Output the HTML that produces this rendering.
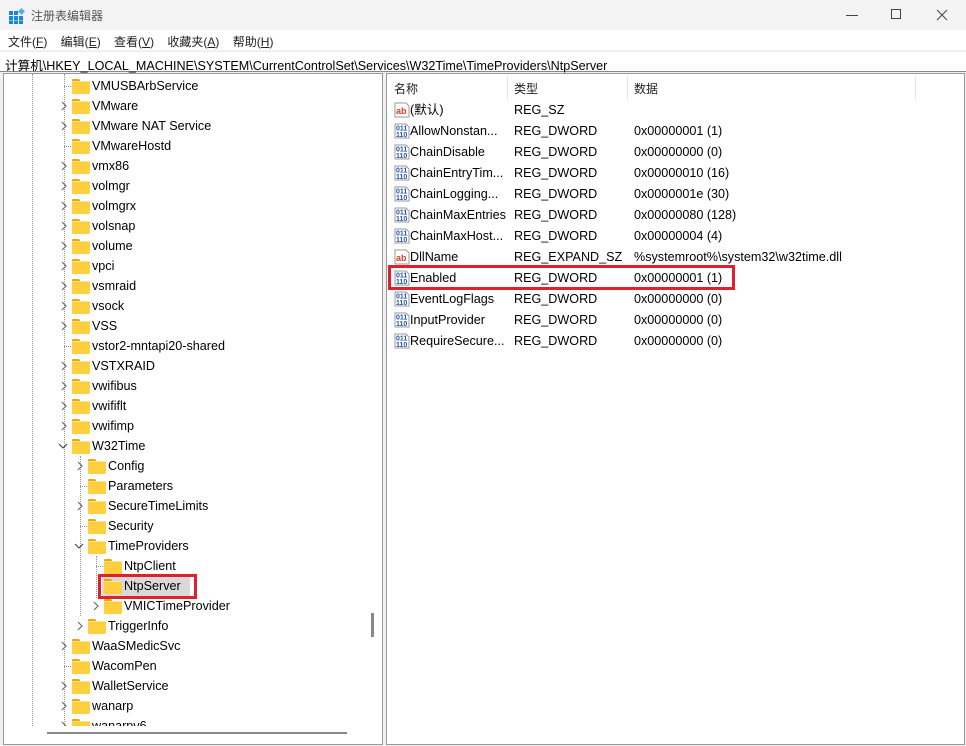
<!DOCTYPE html><html><head><meta charset="utf-8"><style>
*{margin:0;padding:0;box-sizing:border-box}
body{width:966px;height:746px;background:#f0f0f0;font-family:"Liberation Sans","Noto Sans CJK SC",sans-serif;font-size:12.6px;color:#000;position:relative;overflow:hidden}
.a{position:absolute;white-space:nowrap}
.row{position:absolute;height:20px;line-height:20px}
.fold{position:absolute;width:18px;height:14px;top:3px}
.fold:before{content:"";position:absolute;left:0;top:0;width:8px;height:4px;background:#e7a800;border-radius:1px 2px 0 0}
.fold:after{content:"";position:absolute;left:0;top:2px;width:18px;height:12px;background:#ffcf3f;border-top:1px solid #ffe48a;border-radius:1px}
.arr{position:absolute}
.dot{position:absolute;top:10px;width:9px;border-top:1px dotted #888}
.vl{position:absolute;border-left:1px dotted #999}
.ic{position:absolute;left:394px;width:16px;height:16px}
.rr{position:absolute;height:21px;line-height:21px}
</style></head><body>
<div class="a" style="left:0;top:0;width:966px;height:30px;background:#f3f3f3"></div>
<svg class="a" style="left:9px;top:8px" width="16" height="16"><g fill="#1a86d6"><rect x="0" y="3" width="4" height="4"/><rect x="5" y="3" width="4" height="4"/><rect x="0" y="8" width="4" height="4"/><rect x="5" y="8" width="4" height="4"/><rect x="10" y="8" width="4" height="4"/><rect x="0" y="12.5" width="4" height="3.5"/><rect x="5" y="12.5" width="4" height="3.5"/><rect x="10" y="12.5" width="4" height="3.5"/></g><rect x="10" y="1" width="5" height="5" fill="#4fb2ee" transform="rotate(45 12.5 3.5)"/></svg>
<div class="a" style="left:31px;top:7px;font-size:12px;color:#555">注册表编辑器</div>
<div class="a" style="left:846px;top:15px;width:12px;border-top:1px solid #444"></div>
<div class="a" style="left:891px;top:9px;width:10px;height:10px;border:1px solid #444"></div>
<svg class="a" style="left:936px;top:9px" width="12" height="12"><path d="M1 1L11 11M11 1L1 11" stroke="#444" stroke-width="1"/></svg>
<div class="a" style="left:0;top:30px;width:966px;height:20px;background:#fff"></div>
<div class="a" style="left:8px;top:33px;font-size:12px;color:#222">文件(<u>F</u>)&nbsp;&nbsp;&nbsp;&nbsp;编辑(<u>E</u>)&nbsp;&nbsp;&nbsp;&nbsp;查看(<u>V</u>)&nbsp;&nbsp;&nbsp;&nbsp;收藏夹(<u>A</u>)&nbsp;&nbsp;&nbsp;&nbsp;帮助(<u>H</u>)</div>
<div class="a" style="left:0;top:52px;width:966px;height:20px;background:#fff;border-bottom:1px solid #888"></div>
<div class="a" style="left:5px;top:55px;font-size:12.6px">计算机\HKEY_LOCAL_MACHINE\SYSTEM\CurrentControlSet\Services\W32Time\TimeProviders\NtpServer</div>
<div class="a" style="left:3px;top:73px;width:380px;height:672px;background:#fff;border:1px solid #999;overflow:hidden">
<div class="a" style="left:0;top:0;width:362px;height:652px;overflow:hidden" id="t">
<div class="vl" style="left:28px;top:0;height:652px"></div>
<div class="vl" style="left:60px;top:0;height:652px"></div>
<div class="vl" style="left:76px;top:382px;height:160px"></div>
<div class="vl" style="left:92px;top:482px;height:42px"></div>
</div>
<div class="a" style="left:362px;top:0;width:16px;height:652px;background:#fff"></div>
<div class="a" style="left:367px;top:539px;width:3px;height:24px;background:#888"></div>
<div class="a" style="left:0;top:652px;width:378px;height:18px;background:#fff"></div>
<div class="a" style="left:43px;top:658px;width:300px;height:2px;background:#888"></div>
</div>
<div class="a" style="left:386px;top:73px;width:579px;height:672px;background:#fff;border:1px solid #999"></div>
<div class="a" style="left:507px;top:76px;height:24px;border-left:1px solid #e5e5e5"></div>
<div class="a" style="left:627px;top:76px;height:24px;border-left:1px solid #e5e5e5"></div>
<div class="a" style="left:915px;top:76px;height:24px;border-left:1px solid #e5e5e5"></div>
<div class="a" style="left:394px;top:80px;font-size:12px;color:#222">名称</div>
<div class="a" style="left:514px;top:80px;font-size:12px;color:#222">类型</div>
<div class="a" style="left:634px;top:80px;font-size:12px;color:#222">数据</div>
<div id="l"></div>
<div class="a" style="left:388px;top:265px;width:347px;height:25px;border:3px solid #e0202a"></div>
<div class="a" style="left:98px;top:574px;width:99px;height:25px;border:3px solid #e0202a"></div>
<script>
var T=[["VMUSBArbService",0,0],["VMware",0,1],["VMware NAT Service",0,1],["VMwareHostd",0,0],["vmx86",0,1],["volmgr",0,1],["volmgrx",0,1],["volsnap",0,1],["volume",0,1],["vpci",0,1],["vsmraid",0,1],["vsock",0,1],["VSS",0,1],["vstor2-mntapi20-shared",0,0],["VSTXRAID",0,1],["vwifibus",0,1],["vwififlt",0,1],["vwifimp",0,1],["W32Time",0,2],["Config",1,1],["Parameters",1,0],["SecureTimeLimits",1,1],["Security",1,0],["TimeProviders",1,2],["NtpClient",2,0],["NtpServer",2,3],["VMICTimeProvider",2,1],["TriggerInfo",1,1],["WaaSMedicSvc",0,1],["WacomPen",0,0],["WalletService",0,1],["wanarp",0,1],["wanarpv6",0,1]];
var h="";T.forEach(function(r,i){var y=i*20+2,d=r[1]*16,fx=68+d;
if(r[2]==1)h+='<svg class="arr" style="left:'+(55+d)+'px;top:'+(y+5)+'px" width="10" height="10"><path d="M3 1L7 5L3 9" fill="none" stroke="#666" stroke-width="1.1"/></svg>';
else if(r[2]==2)h+='<svg class="arr" style="left:'+(54+d)+'px;top:'+(y+5)+'px" width="10" height="10"><path d="M1 3L5 7L9 3" fill="none" stroke="#444" stroke-width="1.1"/></svg>';
else if(r[2]==0)h+='<div class="dot" style="left:'+(60+d)+'px;top:'+(y+10)+'px"></div>';
if(r[2]==3)h+='<div class="a" style="left:'+(fx-2)+'px;top:'+y+'px;width:88px;height:20px;background:#d9d9d9"></div>';
h+='<div class="fold" style="left:'+fx+'px;top:'+(y+3)+'px"></div><div class="row" style="left:'+(fx+20)+'px;top:'+y+'px">'+r[0]+'</div>';});
document.getElementById("t").innerHTML+=h;
var L=[["(默认)","REG_SZ","",1],["AllowNonstan...","REG_DWORD","0x00000001 (1)"],["ChainDisable","REG_DWORD","0x00000000 (0)"],["ChainEntryTim...","REG_DWORD","0x00000010 (16)"],["ChainLogging...","REG_DWORD","0x0000001e (30)"],["ChainMaxEntries","REG_DWORD","0x00000080 (128)"],["ChainMaxHost...","REG_DWORD","0x00000004 (4)"],["DllName","REG_EXPAND_SZ","%systemroot%\\system32\\w32time.dll",1],["Enabled","REG_DWORD","0x00000001 (1)"],["EventLogFlags","REG_DWORD","0x00000000 (0)"],["InputProvider","REG_DWORD","0x00000000 (0)"],["RequireSecure...","REG_DWORD","0x00000000 (0)"]];
var g="";L.forEach(function(r,i){var y=100+i*21;
g+=r[3]?'<svg class="ic" style="top:'+(y+2)+'px" width="16" height="16"><path d="M1 1h11l3 3v11H1z" fill="#fff" stroke="#999"/><text x="2" y="12" font-size="9" font-weight="bold" fill="#d0402a" font-family="Liberation Sans">ab</text></svg>':'<svg class="ic" style="top:'+(y+2)+'px" width="16" height="16"><path d="M1 1h11l3 3v11H1z" fill="#fff" stroke="#999"/><text x="2" y="7.5" font-size="7" font-weight="bold" fill="#2050b0" font-family="Liberation Sans">011</text><text x="2" y="14" font-size="7" font-weight="bold" fill="#2050b0" font-family="Liberation Sans">110</text></svg>';
g+='<div class="rr" style="left:410px;top:'+y+'px">'+r[0]+'</div><div class="rr" style="left:514px;top:'+y+'px">'+r[1]+'</div><div class="rr" style="left:634px;top:'+y+'px">'+r[2]+'</div>';});
document.getElementById("l").innerHTML=g;
</script>
</body></html>
